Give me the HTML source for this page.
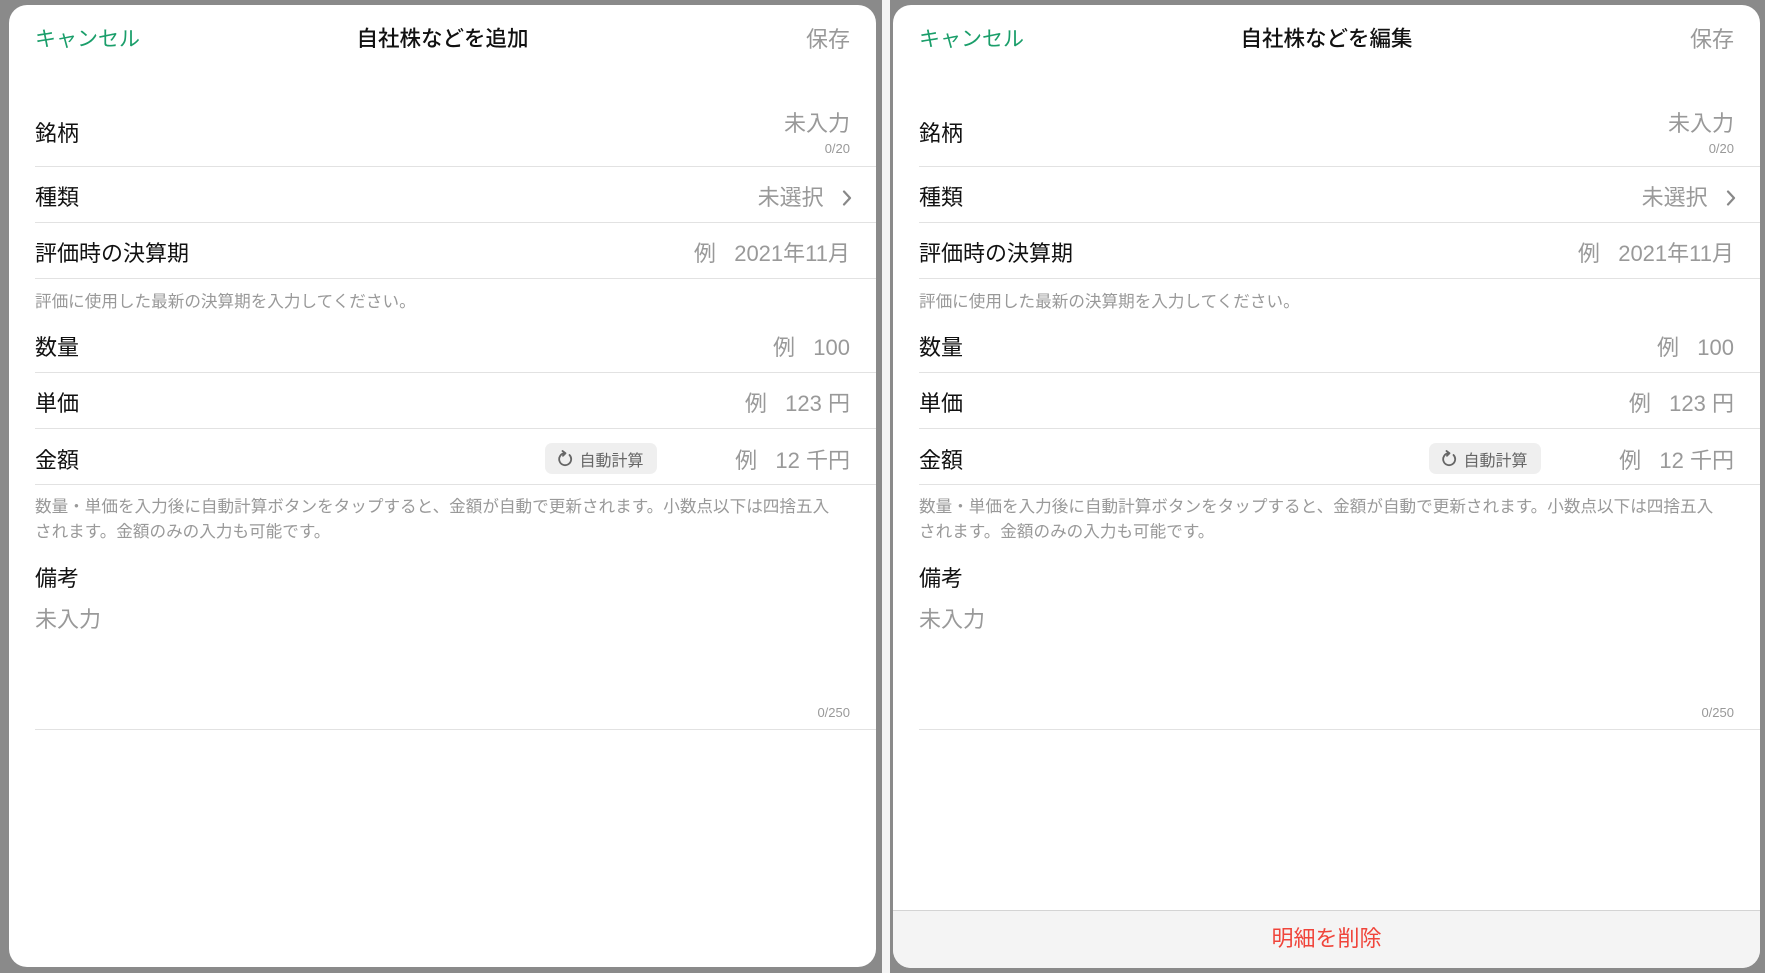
<!DOCTYPE html>
<html><head><meta charset="utf-8">
<style>
*{margin:0;padding:0;box-sizing:border-box}
body{width:1765px;height:973px;background:#8a8a8a;position:relative;overflow:hidden;font-family:"Liberation Sans","Noto Sans CJK JP",sans-serif;}
.strip{position:absolute;left:882px;top:0;width:8px;height:973px;background:#f4f4f4}
.panel{position:absolute;top:5px;width:867px;height:962px;background:#fff;border-radius:18px;overflow:hidden}
.t{position:absolute;white-space:nowrap;line-height:1}
.c{color:#1a9e6a;font-size:21px}
.title{font-size:21.5px;color:#111;font-weight:500;left:0;right:0;text-align:center}
.save{color:#999;font-size:22px;right:26px}
.lab{font-size:22px;color:#111;left:26px}
.val{font-size:22px;color:#999;right:26px}
.small{font-size:13px;color:#999;right:26px}
.note{font-size:16.6px;color:#999;left:26px}
.line{position:absolute;left:26px;right:0;height:1px;background:#e2e2e2}
.btn{position:absolute;left:536px;top:438px;width:112px;height:31px;background:#efefef;border-radius:7px;font-size:16px;color:#666;display:flex;align-items:center;justify-content:center;gap:5px}
.del{position:absolute;left:0;right:0;bottom:0;height:58px;background:#f4f4f4;border-top:1px solid #d4d4d4;color:#f0443a;font-size:22px;text-align:center;line-height:56px}
</style></head><body>
<div class="strip"></div>

<div class="panel" style="left:9px">
<div class="t c" style="left:26px;top:24px">キャンセル</div>
<div class="t title" style="top:24px">自社株などを追加</div>
<div class="t save" style="top:24px">保存</div>
<div class="t lab" style="top:118px">銘柄</div>
<div class="t val" style="top:108px">未入力</div>
<div class="t small" style="top:137px">0/20</div>
<div class="line" style="top:161px"></div>
<div class="t lab" style="top:182px">種類</div>
<div class="t val" style="top:182px;right:24px">未選択&nbsp;&nbsp;&nbsp;<svg width="10" height="16" viewBox="0 0 10 16" style="vertical-align:-1px"><path d="M2 1.5 L8 8 L2 14.5" fill="none" stroke="#888" stroke-width="2.2" stroke-linecap="round" stroke-linejoin="round"/></svg></div>
<div class="line" style="top:217px"></div>
<div class="t lab" style="top:238px">評価時の決算期</div>
<div class="t val" style="top:238px">例&nbsp;&nbsp;&nbsp;2021年11月</div>
<div class="line" style="top:273px"></div>
<div class="t note" style="top:289px">評価に使用した最新の決算期を入力してください。</div>
<div class="t lab" style="top:332px">数量</div>
<div class="t val" style="top:332px">例&nbsp;&nbsp;&nbsp;100</div>
<div class="line" style="top:367px"></div>
<div class="t lab" style="top:388px">単価</div>
<div class="t val" style="top:388px">例&nbsp;&nbsp;&nbsp;123 円</div>
<div class="line" style="top:423px"></div>
<div class="t lab" style="top:445px">金額</div>
<div class="btn"><svg width="16" height="17" viewBox="0 0 16 17"><path d="M11.5 5 A6 6 0 1 1 6.5 3.2" fill="none" stroke="#666" stroke-width="1.8" stroke-linecap="round"/><path d="M4.5 1 L7.5 3.2 L5 5.8" fill="none" stroke="#666" stroke-width="1.8" stroke-linecap="round" stroke-linejoin="round"/></svg>自動計算</div>
<div class="t val" style="top:445px">例&nbsp;&nbsp;&nbsp;12 千円</div>
<div class="line" style="top:479px"></div>
<div class="t note" style="top:494px">数量・単価を入力後に自動計算ボタンをタップすると、金額が自動で更新されます。小数点以下は四捨五入</div>
<div class="t note" style="top:519px">されます。金額のみの入力も可能です。</div>
<div class="t lab" style="top:563px">備考</div>
<div class="t lab" style="top:604px;color:#999">未入力</div>
<div class="t small" style="top:701px">0/250</div>
<div class="line" style="top:724px"></div>
</div>

<div class="panel" style="left:893px;height:963px">
<div class="t c" style="left:26px;top:24px">キャンセル</div>
<div class="t title" style="top:24px">自社株などを編集</div>
<div class="t save" style="top:24px">保存</div>
<div class="t lab" style="top:118px">銘柄</div>
<div class="t val" style="top:108px">未入力</div>
<div class="t small" style="top:137px">0/20</div>
<div class="line" style="top:161px"></div>
<div class="t lab" style="top:182px">種類</div>
<div class="t val" style="top:182px;right:24px">未選択&nbsp;&nbsp;&nbsp;<svg width="10" height="16" viewBox="0 0 10 16" style="vertical-align:-1px"><path d="M2 1.5 L8 8 L2 14.5" fill="none" stroke="#888" stroke-width="2.2" stroke-linecap="round" stroke-linejoin="round"/></svg></div>
<div class="line" style="top:217px"></div>
<div class="t lab" style="top:238px">評価時の決算期</div>
<div class="t val" style="top:238px">例&nbsp;&nbsp;&nbsp;2021年11月</div>
<div class="line" style="top:273px"></div>
<div class="t note" style="top:289px">評価に使用した最新の決算期を入力してください。</div>
<div class="t lab" style="top:332px">数量</div>
<div class="t val" style="top:332px">例&nbsp;&nbsp;&nbsp;100</div>
<div class="line" style="top:367px"></div>
<div class="t lab" style="top:388px">単価</div>
<div class="t val" style="top:388px">例&nbsp;&nbsp;&nbsp;123 円</div>
<div class="line" style="top:423px"></div>
<div class="t lab" style="top:445px">金額</div>
<div class="btn"><svg width="16" height="17" viewBox="0 0 16 17"><path d="M11.5 5 A6 6 0 1 1 6.5 3.2" fill="none" stroke="#666" stroke-width="1.8" stroke-linecap="round"/><path d="M4.5 1 L7.5 3.2 L5 5.8" fill="none" stroke="#666" stroke-width="1.8" stroke-linecap="round" stroke-linejoin="round"/></svg>自動計算</div>
<div class="t val" style="top:445px">例&nbsp;&nbsp;&nbsp;12 千円</div>
<div class="line" style="top:479px"></div>
<div class="t note" style="top:494px">数量・単価を入力後に自動計算ボタンをタップすると、金額が自動で更新されます。小数点以下は四捨五入</div>
<div class="t note" style="top:519px">されます。金額のみの入力も可能です。</div>
<div class="t lab" style="top:563px">備考</div>
<div class="t lab" style="top:604px;color:#999">未入力</div>
<div class="t small" style="top:701px">0/250</div>
<div class="line" style="top:724px"></div>
<div class="del">明細を削除</div>
</div>
</body></html>
